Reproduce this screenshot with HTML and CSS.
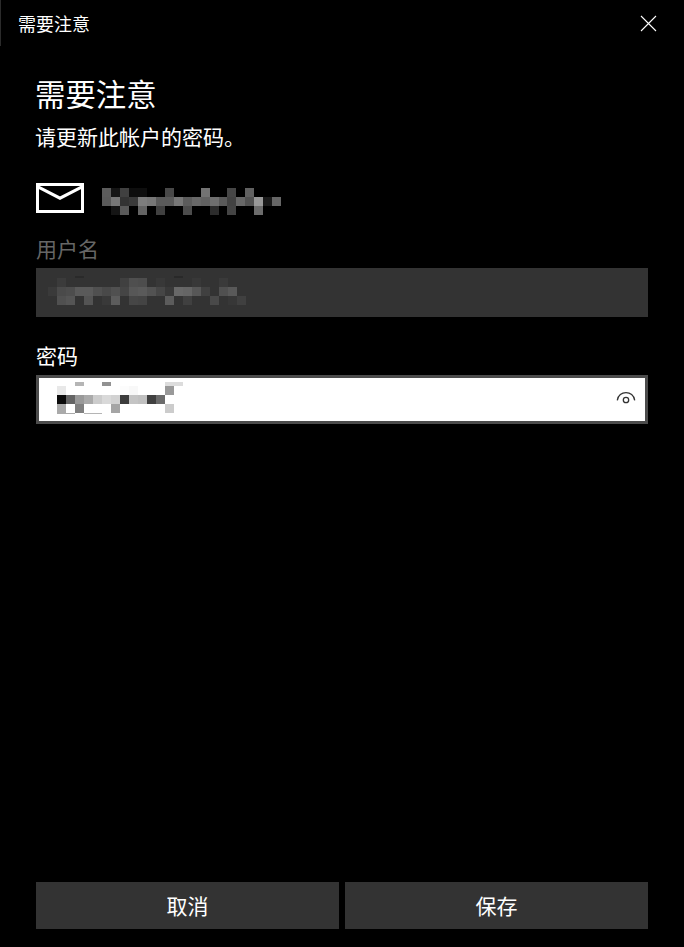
FILE: index.html
```html
<!DOCTYPE html>
<html lang="zh-CN">
<head>
<meta charset="utf-8">
<title>需要注意</title>
<link rel="stylesheet" href="styles.css">
</head>
<body>
<div class="dialog">
  <header class="titlebar">
    <span class="titlebar-text">需要注意</span>
    <svg class="close" width="17" height="17" viewBox="0 0 17 17" role="button" aria-label="关闭"><path d="M1 1L16 16M16 1L1 16"/></svg>
  </header>
  <main class="content">
    <h1 class="heading">需要注意</h1>
    <p class="message">请更新此帐户的密码。</p>
    <div class="account">
      <svg class="mail" width="48" height="30" viewBox="0 0 48 30"><path d="M1.5 1.5H46.5V28.5H1.5Z"/><path d="M2.5 4.2L24 15.2L45.5 4.2"/></svg>
      <svg class="mosaic" width="180" height="27" data-mosaic="account"></svg>
    </div>
    <div class="label label-muted">用户名</div>
    <div class="field field-disabled">
      <svg class="mosaic" width="198" height="30" data-mosaic="user"></svg>
    </div>
    <div class="label label-password">密码</div>
    <div class="field field-password">
      <svg class="mosaic" width="135" height="33" data-mosaic="password"></svg>
      <svg class="eye" width="20" height="14" viewBox="0 0 20 14"><path d="M1.3 9.3C2.5 -1 17.500 -1 18.700 9.300"/><circle cx="10" cy="9" r="2.700"/></svg>
    </div>
  </main>
  <footer class="actions">
    <button class="action">取消</button>
    <button class="action">保存</button>
  </footer>
</div>
<script src="mosaic.js"></script>
</body>
</html>
```
FILE: styles.css
```css
* { box-sizing: border-box; }
body {
  margin: 0;
  background: #000;
  color: #fff;
  font-family: "Noto Sans CJK SC", sans-serif;
}
.dialog { display: flex; flex-direction: column; height: 947px; }
.titlebar {
  display: flex;
  justify-content: space-between;
  height: 46px;
  padding: 0 27px 0 17px;
  border-left: 1px solid #2b2b2b;
}
.titlebar-text { font-size: 18px; line-height: 46px; }
.close { margin-top: 15px; stroke: #fff; stroke-width: 1.1; }
.content { flex: 1; padding: 0 36px; }
.heading { margin: 24px 0 0 -1px; font-size: 30.4px; line-height: 46px; font-weight: 400; }
.message { margin: 5px 0 0 -1px; font-size: 21px; line-height: 30px; }
.account { display: flex; gap: 18px; height: 32px; margin-top: 32px; }
.account .mosaic { margin-top: 5px; }
.mail { fill: none; stroke: #fff; stroke-width: 3; }
.mosaic { display: block; flex: none; shape-rendering: crispEdges; }
.label { font-size: 21px; line-height: 30px; }
.label-muted { margin-top: 18px; color: #666; }
.label-password { margin-top: 23px; }
.field { display: flex; }
.field-disabled { height: 49px; margin-top: 5px; padding: 8px 0 0 12px; background: #333; }
.field-password {
  justify-content: space-between;
  height: 49px;
  margin-top: 5px;
  padding: 4px 9px 0 18px;
  border: 3px solid #4c4c4c;
  background: #fff;
}
.eye { margin-top: 9px; fill: none; stroke: #333; stroke-width: 1.3; }
.actions { display: flex; gap: 6px; padding: 0 36px 18px; }
.action {
  flex: 1;
  height: 47px;
  padding: 0;
  border: 0;
  background: #333;
  color: #fff;
  font: 21px/47px "Noto Sans CJK SC", sans-serif;
}
```
FILE: mosaic.js
```js
// Each block is [x, y, width, height, grey level in hex].
// A row is [y, "x:grey ..."] made of 9px squares.
const mosaics = {
  account: {
    rows: [
      [0, "0:5c 9:15 18:40 27:0e 36:0e 63:48 99:73 125:46 143:61"],
      [9, "0:5a 9:77 18:33 27:3a 36:7d 45:77 54:5a 63:5a 72:77 81:5c 90:68 99:62 108:6f 117:5a 125:42 134:68 143:52 152:99 161:1a 170:66"],
      [18, "9:15 18:5a 36:64 54:40 81:4c 108:2c 125:44 152:6c"]
    ],
    bars: []
  },
  user: {
    rows: [
      [2, "9:3b 72:40 81:4f 90:4d 108:38 144:38 171:3a"],
      [11, "0:3a 9:4a 18:4d 27:5a 36:5a 45:50 54:49 63:50 72:45 81:57 90:5a 99:52 108:46 117:39 126:68 135:65 144:57 153:40 171:50 180:59"],
      [20, "9:50 18:55 36:54 54:39 63:5c 81:46 90:44 117:5c 135:40 162:49 180:37 189:40"]
    ],
    bars: [[27, 0, 9, 2, "2a"], [126, 0, 9, 2, "29"]]
  },
  password: {
    rows: [
      [4, "0:e8 63:fc 72:f8 108:99"],
      [13, "0:0a 9:64 18:99 27:aa 36:cc 45:d9 54:d2 63:3c 72:c4 81:c0 90:40 99:6b"],
      [22, "0:aa 18:80 54:a5 108:cc"]
    ],
    bars: [[18, 0, 9, 4, "b5"], [45, 0, 9, 4, "92"], [108, 0, 18, 4, "dc"], [0, 31, 18, 1, "aa"], [27, 31, 18, 1, "b5"]]
  }
};

for (const svg of document.querySelectorAll("[data-mosaic]")) {
  const { rows, bars } = mosaics[svg.dataset.mosaic];
  const blocks = rows.flatMap(([y, cells]) =>
    cells.split(" ").map(cell => {
      const [x, grey] = cell.split(":");
      return [x, y, 9, 9, grey];
    })
  ).concat(bars);
  svg.innerHTML = blocks.map(([x, y, w, h, g]) =>
    `<rect x="${x}" y="${y}" width="${w}" height="${h}" fill="#${g}${g}${g}"/>`
  ).join("");
}
```
